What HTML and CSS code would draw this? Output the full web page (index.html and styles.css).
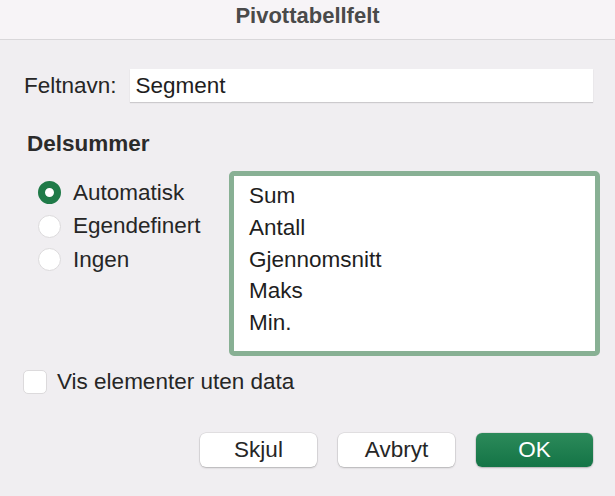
FILE: index.html
```html
<!DOCTYPE html>
<html lang="no">
<head>
  <meta charset="UTF-8" />
  <meta name="viewport" content="width=device-width, initial-scale=1.0" />
  <title>Pivottabellfelt</title>
  <link rel="stylesheet" href="styles.css">
</head>
<body>

  <!-- Title bar -->
  <div class="titlebar">Pivottabellfelt</div>

  <div class="dialog">
    <!-- Field name -->
    <div class="field-row">
      <label class="field-label" for="fieldname">Feltnavn:</label>
      <div class="field-input" id="fieldname">Segment</div>
    </div>

    <h2 class="section-title">Delsummer</h2>

    <div class="subtotals">
      <div class="radios">
        <div class="radio-row"><span class="radio checked"></span>Automatisk</div>
        <div class="radio-row"><span class="radio"></span>Egendefinert</div>
        <div class="radio-row"><span class="radio"></span>Ingen</div>
      </div>
      <div class="listbox">
        <div class="list-item">Sum</div>
        <div class="list-item">Antall</div>
        <div class="list-item">Gjennomsnitt</div>
        <div class="list-item">Maks</div>
        <div class="list-item">Min.</div>
      </div>
    </div>

    <div class="check-row"><span class="checkbox"></span>Vis elementer uten data</div>

    <!-- Buttons -->
    <div class="buttons">
      <button class="btn">Skjul</button>
      <button class="btn">Avbryt</button>
      <button class="btn primary">OK</button>
    </div>
  </div>

</body>
</html>
```

FILE: styles.css
```css
body {
  margin: 0;
  padding: 0;
  background: #f0eef1;
  font-family: "Liberation Sans", Arial, sans-serif;
  font-size: 22.5px;
  color: #262626;
  width: 615px;
  height: 496px;
  overflow: hidden;
}

.titlebar {
  height: 39px;
  line-height: 32px;
  text-align: center;
  font-size: 22px;
  font-weight: bold;
  color: #4a4a4a;
  background: #f7f4f7;
  border-bottom: 1px solid #d9d7da;
}

.dialog {
  padding: 29px 22px 0 24px;
}

.field-row {
  display: flex;
  align-items: center;
  gap: 13px;
}

.field-input {
  flex: 1;
  height: 33px;
  line-height: 33px;
  background: #ffffff;
  padding-left: 6px;
  color: #1e1e1e;
  box-shadow: 0 1px 1px rgba(0, 0, 0, 0.15);
}

.section-title {
  margin: 30px 0 0 3px;
  font-size: 22.5px;
  font-weight: bold;
  color: #2b2b2b;
  line-height: 24px;
}

.subtotals {
  display: flex;
  justify-content: space-between;
  margin-top: 15px;
}

.radios {
  padding-top: 5px;
  padding-left: 14px;
}

.radio-row {
  display: flex;
  align-items: center;
  gap: 12px;
  height: 33.5px;
}

.radio {
  width: 21px;
  height: 21px;
  border-radius: 50%;
  background: #ffffff;
  border: 1px solid #dcdadc;
}

.radio.checked {
  width: 9px;
  height: 9px;
  border: 7px solid #1f7a48;
}

.listbox {
  width: 346px;
  height: 171px;
  border: 5px solid #88b094;
  border-radius: 5px;
  background: #ffffff;
  padding: 4px 0 0 15px;
  margin-right: -7px;
}

.list-item {
  line-height: 31.75px;
  color: #1e1e1e;
}

.check-row {
  display: flex;
  align-items: center;
  gap: 10px;
  margin-top: 13px;
  margin-left: -1px;
}

.checkbox {
  width: 22px;
  height: 22px;
  border-radius: 5px;
  background: #ffffff;
  border: 1px solid #dcdadc;
}

.buttons {
  display: flex;
  justify-content: flex-end;
  gap: 21px;
  margin-top: 38px;
}

.btn {
  width: 117px;
  height: 34px;
  border: none;
  border-radius: 6px;
  background: #ffffff;
  box-shadow: 0 0 0 0.5px rgba(0, 0, 0, 0.12), 0 1px 2px rgba(0, 0, 0, 0.2);
  font-family: "Liberation Sans", Arial, sans-serif;
  font-size: 22.5px;
  color: #262626;
  padding: 0;
}

.btn.primary {
  background: linear-gradient(#2c8a5a, #147446);
  color: #ffffff;
}
```
